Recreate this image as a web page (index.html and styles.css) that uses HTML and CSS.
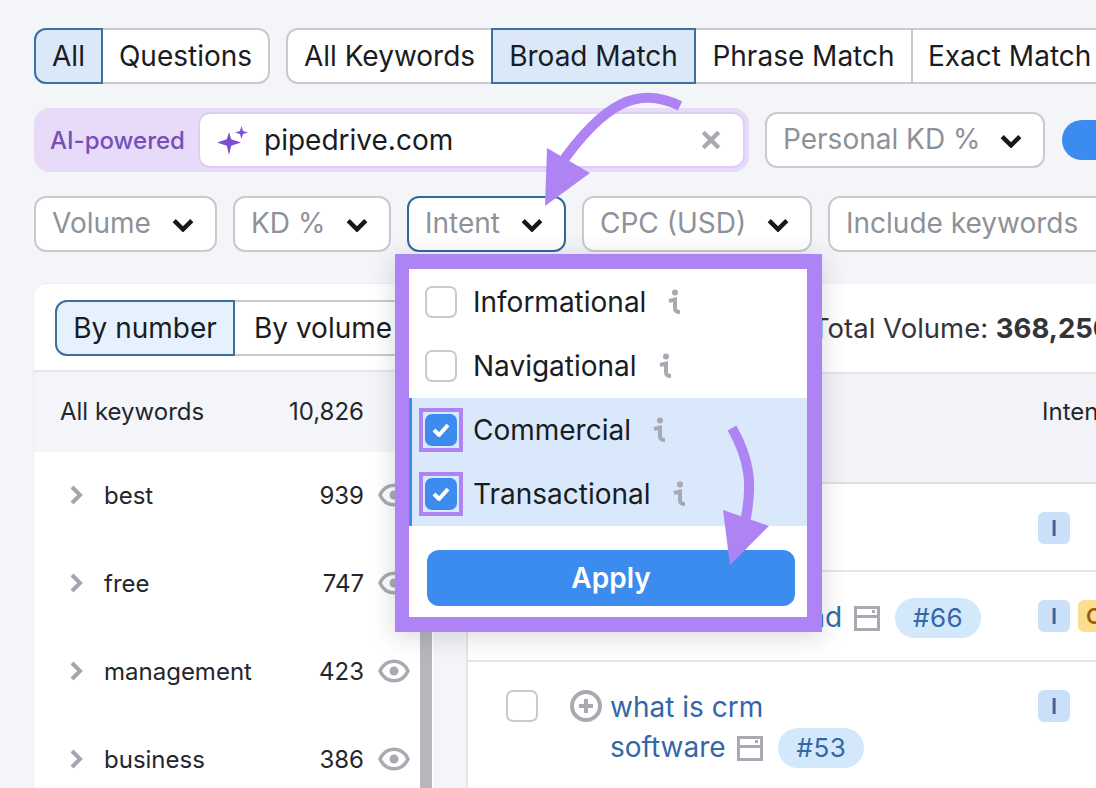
FILE: index.html
```html
<!DOCTYPE html>
<html lang="en">
<head>
<meta charset="utf-8">
<title>Keyword Magic Tool</title>
<link rel="stylesheet" href="styles.css">
</head>
<body>
<div class="page">
  <div class="row row-tabs">
    <div class="seg seg-a">
      <span class="seg-item on w-all">All</span>
      <span class="seg-item w-q">Questions</span>
    </div>
    <div class="seg seg-b">
      <span class="seg-item w-ak">All Keywords</span>
      <span class="seg-item on w-bm">Broad Match</span>
      <span class="seg-item w-pm">Phrase Match</span>
      <span class="seg-item w-em">Exact Match</span>
    </div>
  </div>

  <div class="row row-ai">
    <div class="ai-wrap">
      <span class="ai-label">AI-powered</span>
      <div class="ai-input">
        <svg class="sparkle" viewBox="0 0 32 32"><path d="M12 8 14.200 15.300 24 18.500 14.200 21.700 12 31 9.800 21.700 0 18.500 9.800 15.300Z"/><path d="M24.500 2 26 7 31 8.500 26 10 24.500 15 23 10 18 8.500 23 7Z"/></svg>
        <span class="ai-text">pipedrive.com</span>
        <svg class="close" viewBox="0 0 20 20"><path d="M3 3 17 17M17 3 3 17"/></svg>
      </div>
    </div>
    <div class="select w-pk">Personal KD %<svg class="chev" viewBox="0 0 20 12"><path d="M2 2 10 10 18 2"/></svg></div>
    <span class="blue-btn"></span>
  </div>

  <div class="row row-filters">
    <div class="select w-vol">Volume<svg class="chev" viewBox="0 0 20 12"><path d="M2 2 10 10 18 2"/></svg></div>
    <div class="select w-kd">KD %<svg class="chev" viewBox="0 0 20 12"><path d="M2 2 10 10 18 2"/></svg></div>
    <div class="select active w-int">Intent<svg class="chev" viewBox="0 0 20 12"><path d="M2 2 10 10 18 2"/></svg></div>
    <div class="select w-cpc">CPC (USD)<svg class="chev" viewBox="0 0 20 12"><path d="M2 2 10 10 18 2"/></svg></div>
    <div class="select w-inc">Include keywords</div>
  </div>

  <div class="panels">
    <aside class="side">
      <div class="side-top">
        <div class="seg seg-c">
          <span class="seg-item on light w-bn">By number</span>
          <span class="seg-item w-bv">By volume</span>
        </div>
      </div>
      <div class="side-body">
        <div class="side-all"><span>All keywords</span><span class="num-all">10,826</span></div>
        <div class="group"><svg class="gt" viewBox="0 0 14 20"><path d="M3 2 11 10 3 18"/></svg><span class="g-name">best</span><span class="g-num">939</span><svg class="eye" viewBox="0 0 32 24"><path class="eye-o" d="M2 12C8 -1 24 -1 30 12 24 25 8 25 2 12Z"/><circle cx="16" cy="12" r="4.500"/></svg></div>
        <div class="group"><svg class="gt" viewBox="0 0 14 20"><path d="M3 2 11 10 3 18"/></svg><span class="g-name">free</span><span class="g-num">747</span><svg class="eye" viewBox="0 0 32 24"><path class="eye-o" d="M2 12C8 -1 24 -1 30 12 24 25 8 25 2 12Z"/><circle cx="16" cy="12" r="4.500"/></svg></div>
        <div class="group"><svg class="gt" viewBox="0 0 14 20"><path d="M3 2 11 10 3 18"/></svg><span class="g-name">management</span><span class="g-num">423</span><svg class="eye" viewBox="0 0 32 24"><path class="eye-o" d="M2 12C8 -1 24 -1 30 12 24 25 8 25 2 12Z"/><circle cx="16" cy="12" r="4.500"/></svg></div>
        <div class="group"><svg class="gt" viewBox="0 0 14 20"><path d="M3 2 11 10 3 18"/></svg><span class="g-name">business</span><span class="g-num">386</span><svg class="eye" viewBox="0 0 32 24"><path class="eye-o" d="M2 12C8 -1 24 -1 30 12 24 25 8 25 2 12Z"/><circle cx="16" cy="12" r="4.500"/></svg></div>
        <span class="scrollbar"></span>
      </div>
    </aside>

    <section class="table">
      <div class="table-top">Total Volume:&nbsp;<b>368,250</b></div>
      <div class="table-head"><span class="th-intent">Intent</span></div>

      <div class="tr tr-1">
        <span class="box"></span>
        <svg class="plus" viewBox="0 0 32 32"><circle cx="16" cy="16" r="14"/><path d="M16 9V23M9 16H23"/></svg>
        <div class="kw">crm</div>
        <div class="intents"><span class="badge">I</span></div>
      </div>
      <div class="tr tr-2">
        <span class="box"></span>
        <svg class="plus" viewBox="0 0 32 32"><circle cx="16" cy="16" r="14"/><path d="M16 9V23M9 16H23"/></svg>
        <div class="kw">crm software and <svg class="win" viewBox="0 0 26 25"><path d="M0 0H26V25H0ZM3 3V9H23V3ZM3 12V22H23V12ZM18 4H21V7H18Z"/></svg><span class="pill">#66</span></div>
        <div class="intents"><span class="badge">I</span><span class="badge yellow">C</span></div>
      </div>
      <div class="tr tr-3">
        <span class="box"></span>
        <svg class="plus" viewBox="0 0 32 32"><circle cx="16" cy="16" r="14"/><path d="M16 9V23M9 16H23"/></svg>
        <div class="kw">what is crm<br>software <svg class="win" viewBox="0 0 26 25"><path d="M0 0H26V25H0ZM3 3V9H23V3ZM3 12V22H23V12ZM18 4H21V7H18Z"/></svg><span class="pill">#53</span></div>
        <div class="intents"><span class="badge">I</span></div>
      </div>
    </section>
  </div>
</div>

<div class="dropdown">
  <div class="opt"><span class="box"></span><span class="opt-text">Informational</span><svg class="info" viewBox="0 0 14 26"><circle cx="8" cy="3.500" r="3"/><path d="M2 12 8 10.500V19Q8 23 13 23"/></svg></div>
  <div class="opt"><span class="box"></span><span class="opt-text">Navigational</span><svg class="info" viewBox="0 0 14 26"><circle cx="8" cy="3.500" r="3"/><path d="M2 12 8 10.500V19Q8 23 13 23"/></svg></div>
  <div class="opt sel"><span class="box checked mark"><svg viewBox="0 0 18 14"><path d="M2 7 7 12 16 2"/></svg></span><span class="opt-text">Commercial</span><svg class="info" viewBox="0 0 14 26"><circle cx="8" cy="3.500" r="3"/><path d="M2 12 8 10.500V19Q8 23 13 23"/></svg></div>
  <div class="opt sel"><span class="box checked mark"><svg viewBox="0 0 18 14"><path d="M2 7 7 12 16 2"/></svg></span><span class="opt-text">Transactional</span><svg class="info" viewBox="0 0 14 26"><circle cx="8" cy="3.500" r="3"/><path d="M2 12 8 10.500V19Q8 23 13 23"/></svg></div>
  <div class="apply-wrap"><button class="apply">Apply</button></div>
</div>

<svg class="arrows" viewBox="0 0 1096 788">
  <path class="a-line" d="M680 106C640 86 605 100 558 168"/>
  <path class="a-head" d="M547 148 590 173 545 206Z"/>
  <path class="a-line" d="M732 428C750 460 753 485 745 522"/>
  <path class="a-head" d="M723 510 769 526 730 565Z"/>
</svg>
</body>
</html>
```
FILE: styles.css
```css
* { box-sizing: border-box; }
html, body { margin: 0; height: 100%; }
body {
  width: 1096px;
  height: 788px;
  overflow: hidden;
  position: relative;
  background: #f4f5f9;
  font-family: Inter, "Liberation Sans", sans-serif;
  color: #1a1c24;
}
.page { padding: 28px 0 0 34px; width: 1300px; display: flex; flex-direction: column; }
.row { display: flex; flex-shrink: 0; }
.row-tabs { gap: 16px; height: 56px; }
.row-ai { margin-top: 24px; height: 64px; align-items: center; gap: 16px; }
.row-filters { margin-top: 24px; height: 56px; gap: 16px; }

.seg { display: flex; height: 56px; background: #fff; border: 2px solid #c9cace; border-radius: 12px; }
.seg-item {
  display: flex; align-items: center; justify-content: center;
  font-size: 28px; height: 56px; margin-top: -2px; flex-shrink: 0;
  border-left: 2px solid #c9cace;
}
.seg-item:first-child { border-left: 0; }
.seg-item.on { background: #dbe8f8; border: 2px solid #3d6f9f; }
.seg-item.on.light { background: #e5f2fd; }
.seg-a .seg-item.on, .seg-c .seg-item.on { margin-left: -2px; border-radius: 12px 0 0 12px; }
.seg-b { border-right: 0; border-radius: 12px 0 0 12px; }
.seg-b .seg-item:first-child { margin-left: 0; }
.w-all { width: 69px; }
.w-q { width: 165px; border-left: 0; }
.w-ak { width: 203px; }
.w-bm { width: 205px; }
.w-pm { width: 215px; border-left: 0; }
.w-em { width: 200px; justify-content: flex-start; padding-left: 15px; }

.ai-wrap { width: 715px; height: 64px; padding: 4px; background: #e8daf9; border-radius: 16px; display: flex; align-items: center; }
.ai-label { width: 160px; padding-left: 13px; flex-shrink: 0; font-size: 24px; font-weight: 500; color: #7450b8; margin-left: -1px; }
.ai-input { flex: 1; height: 56px; background: #fff; border-radius: 12px; border: 2px solid #dfcdf6; display: flex; align-items: center; padding: 0 21px 0 17px; margin-left: 1px; }
.sparkle { width: 32px; height: 32px; fill: #7c4fd0; flex-shrink: 0; }
.ai-text { font-size: 28px; margin-left: 15px; flex: 1; }
.close { width: 22px; height: 22px; fill: none; stroke: #a9aab0; stroke-width: 4; }

.select {
  height: 56px; background: #fff; border: 2px solid #c9cace; border-radius: 12px;
  display: flex; align-items: center; justify-content: space-between;
  padding: 0 21px 2px 16px; font-size: 28px; color: #8f9199; flex-shrink: 0;
}
.select.active { border-color: #2f6a97; }
.chev { width: 22px; height: 14px; fill: none; stroke: #17181d; stroke-width: 4; flex-shrink: 0; margin-top: 3px; }
.w-pk { width: 280px; }
.w-vol { width: 183px; }
.w-kd { width: 158px; }
.w-int { width: 159px; }
.w-cpc { width: 230px; }
.w-inc { width: 300px; }
.blue-btn { width: 100px; height: 40px; background: #3c8cf0; border-radius: 20px; margin-left: 1px; }

.panels { display: flex; gap: 32px; margin-top: 32px; }
.side { width: 400px; background: #fff; border-radius: 12px 12px 0 0; box-shadow: 0 0 0 1px #ecedf1; flex-shrink: 0; }
.side-top { height: 88px; padding: 16px 0 0 21px; border-bottom: 2px solid #e4e5ea; overflow: hidden; }
.seg-c { width: 400px; }
.w-bn { width: 180px; }
.w-bv { width: 200px; border-left: 0; justify-content: flex-start; padding-left: 19px; }
.side-body { position: relative; height: 420px; }
.side-all { height: 80px; background: #f4f5f9; display: flex; justify-content: space-between; align-items: center; padding: 0 70px 2px 26px; font-size: 24px; color: #24262e; }
.group { height: 88px; display: flex; align-items: center; font-size: 24px; padding: 0 0 2px 35px; color: #24262e; }
.gt { width: 14px; height: 20px; fill: none; stroke: #a4a5ad; stroke-width: 4; flex-shrink: 0; }
.g-name { margin-left: 21px; flex: 1; }
.g-num { width: 70px; text-align: right; }
.eye { width: 32px; height: 24px; margin: 0 24px 0 14px; flex-shrink: 0; fill: #a9aab1; }
.eye .eye-o { fill: none; stroke: #a9aab1; stroke-width: 3.5; }
.scrollbar { position: absolute; left: 386px; top: 0; width: 12px; height: 420px; background: #b6b6bc; }

.table { width: 800px; background: #fff; flex-shrink: 0; border-left: 2px solid #e4e5ea; }
.table-top { height: 88px; padding-left: 344px; display: flex; align-items: center; font-size: 27.5px; color: #33343a; white-space: pre; }
.table-top b { font-weight: 700; }
.table-head { height: 112px; background: #f2f3f8; border-top: 2px solid #e4e5ea; border-bottom: 2px solid #dfe0e6; padding: 23px 0 0 574px; font-size: 24px; }
.th-intent { color: #24262e; }
.tr { display: grid; grid-template-columns: 32px 32px 468px auto; padding-left: 38px; border-bottom: 2px solid #e4e5ea; }
.tr-1 { height: 88px; padding-top: 28px; }
.tr-2 { height: 90px; padding-top: 28px; }
.tr-3 { height: 130px; padding-top: 28px; }
.box { display: block; position: relative; width: 32px; height: 32px; background: #fff; border: 2px solid #c9cace; border-radius: 7px; flex-shrink: 0; }
.plus { grid-column: 2; width: 32px; height: 32px; margin-left: 32px; fill: none; stroke: #a9aab1; stroke-width: 4; }
.kw { padding-left: 40px; font-size: 28px; line-height: 40px; color: #3367a8; margin-top: -3px; white-space: nowrap; }
.win { width: 26px; height: 25px; fill: #a9aab1; fill-rule: evenodd; vertical-align: -4px; margin: 0 10px 0 4px; }
.pill { display: inline-block; width: 86px; height: 40px; border-radius: 20px; background: #d3e8fb; text-align: center; font-size: 26px; letter-spacing: .5px; line-height: 40px; vertical-align: top; margin: 1px 0 0 5px; }
.intents { display: flex; gap: 8px; }
.badge { width: 32px; height: 32px; background: #c9e0f8; color: #3367a8; border-radius: 6px; display: flex; align-items: center; justify-content: center; font-size: 22px; font-weight: 600; }
.badge.yellow { background: #fbdf8f; color: #9a5c12; }

.dropdown {
  position: absolute; left: 395px; top: 254px; width: 427px; height: 378px;
  border: 15px solid #ae84f4; border-left-width: 14px; background: #fff; padding-top: 1px;
  box-shadow: 0 4px 24px rgba(40, 40, 70, .18);
  display: flex; flex-direction: column;
}
.opt { height: 64px; display: flex; align-items: center; padding-left: 16px; font-size: 28px; flex-shrink: 0; }
.opt.sel { background: #d9e8fb; box-shadow: inset 3px 0 0 #3c8cf0; }
.opt-text { margin-left: 16px; }
.info { width: 14px; height: 26px; margin-left: 21px; fill: #a9aab1; stroke: none; }
.info path { fill: none; stroke: #a9aab1; stroke-width: 4; }
.box.checked { background: #3c8cf0; border-color: #3c8cf0; display: flex; align-items: center; justify-content: center; }
.box.checked svg { width: 18px; height: 14px; fill: none; stroke: #fff; stroke-width: 4; }
.box.mark::after { content: ""; position: absolute; inset: -8px; border: 4px solid #ae84f4; }
.apply-wrap { padding: 24px 12px 0 18px; }
.apply { display: block; width: 100%; height: 56px; border: 0; border-radius: 12px; background: #3c8cf0; color: #fff; font: 600 28px Inter, "Liberation Sans", sans-serif; }

.arrows { position: absolute; left: 0; top: 0; width: 1096px; height: 788px; pointer-events: none; }
.a-line { fill: none; stroke: #ae84f4; stroke-width: 10; }
.a-head { fill: #ae84f4; }
```
